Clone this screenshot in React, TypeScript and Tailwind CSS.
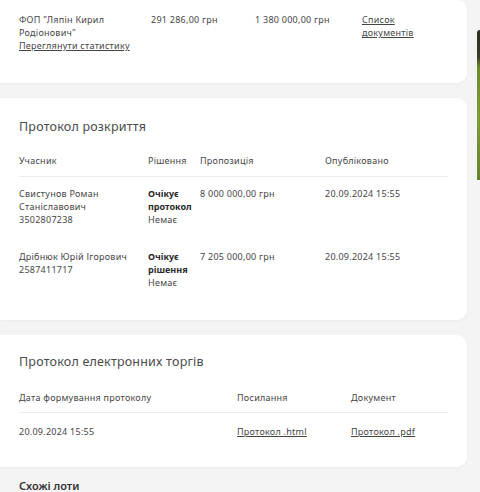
import React from "react";

const font = { fontFamily: '"Noto Sans", "Open Sans", sans-serif' };

export default function App() {
  return (
    <div className="relative w-[480px] h-[492px] overflow-hidden bg-[#f4f4f4] text-[#454545]" style={font}>
      <div className="flex">
        <div className="w-[467px] flex flex-col">
          {/* Card 1 */}
          <div className="bg-white rounded-br-[10px] rounded-tr-[10px] shadow-[0_1px_3px_rgba(0,0,0,0.04)] pl-[19px] pr-[19px] pt-[13px] pb-[31px]">
            <div className="flex text-[9px] leading-[13px] tracking-[0.25px]">
              <div className="w-[132px]">
                <div>ФОП "Ляпін Кирил</div>
                <div>Родіонович"</div>
                <div className="underline">Переглянути статистику</div>
              </div>
              <div className="w-[104px]">291 286,00 грн</div>
              <div className="w-[107px]">1 380 000,00 грн</div>
              <div className="underline">
                <div>Список</div>
                <div>документів</div>
              </div>
            </div>
          </div>

          {/* Card 2 */}
          <div className="mt-[15px] bg-white rounded-r-[10px] shadow-[0_1px_3px_rgba(0,0,0,0.04)] pl-[19px] pr-[19px] pt-[20px] pb-[17px]">
            <div className="text-[12.5px] leading-[18px] text-[#4a4a4a] tracking-[0.2px]">Протокол розкриття</div>
            <div className="mt-[18px] flex text-[9px] leading-[13px] tracking-[0.25px] pb-[9px] border-b border-[#ececec]">
              <div className="w-[129px]">Учасник</div>
              <div className="w-[52px]">Рішення</div>
              <div className="w-[125px]">Пропозиція</div>
              <div>Опубліковано</div>
            </div>
            <div className="flex text-[9px] leading-[13px] tracking-[0.25px] pt-[10px] pb-[14px]">
              <div className="w-[129px]">
                <div>Свистунов Роман</div>
                <div>Станіславович</div>
                <div>3502807238</div>
              </div>
              <div className="w-[52px]">
                <div className="font-bold text-[#2a2a2a] tracking-normal">Очікує</div>
                <div className="font-bold text-[#2a2a2a] tracking-normal">протокол</div>
                <div>Немає</div>
              </div>
              <div className="w-[125px]">8 000 000,00 грн</div>
              <div>20.09.2024 15:55</div>
            </div>
            <div className="flex text-[9px] leading-[13px] tracking-[0.25px] pt-[10px] pb-[14px]">
              <div className="w-[129px]">
                <div>Дрібнюк Юрій Ігорович</div>
                <div>2587411717</div>
              </div>
              <div className="w-[52px]">
                <div className="font-bold text-[#2a2a2a] tracking-normal">Очікує</div>
                <div className="font-bold text-[#2a2a2a] tracking-normal">рішення</div>
                <div>Немає</div>
              </div>
              <div className="w-[125px]">7 205 000,00 грн</div>
              <div>20.09.2024 15:55</div>
            </div>
          </div>

          {/* Card 3 */}
          <div className="mt-[15px] bg-white rounded-r-[10px] shadow-[0_1px_3px_rgba(0,0,0,0.04)] pl-[19px] pr-[19px] pt-[18px] pb-[29px]">
            <div className="text-[12.5px] leading-[18px] text-[#4a4a4a] tracking-[0.2px]">Протокол електронних торгів</div>
            <div className="mt-[20px] flex text-[9px] leading-[13px] tracking-[0.25px] pb-[8px] border-b border-[#ececec]">
              <div className="w-[218px]">Дата формування протоколу</div>
              <div className="w-[114px]">Посилання</div>
              <div>Документ</div>
            </div>
            <div className="flex text-[9px] leading-[13px] tracking-[0.25px] pt-[12px]">
              <div className="w-[218px]">20.09.2024 15:55</div>
              <div className="w-[114px] underline">Протокол .html</div>
              <div className="underline">Протокол .pdf</div>
            </div>
          </div>

          <div className="mt-[12px] pl-[19px] text-[11px] leading-[14px] font-semibold text-[#333]">Схожі лоти</div>
        </div>
        <div className="ml-[10px] mt-[30px] w-[3px] h-[150px] rounded-tl-[4px] bg-[linear-gradient(180deg,#2b2b22_0%,#3a3d26_18%,#6f8a2e_25%,#7f9a3a_60%,#65802c_100%)]" />
      </div>
    </div>
  );
}
